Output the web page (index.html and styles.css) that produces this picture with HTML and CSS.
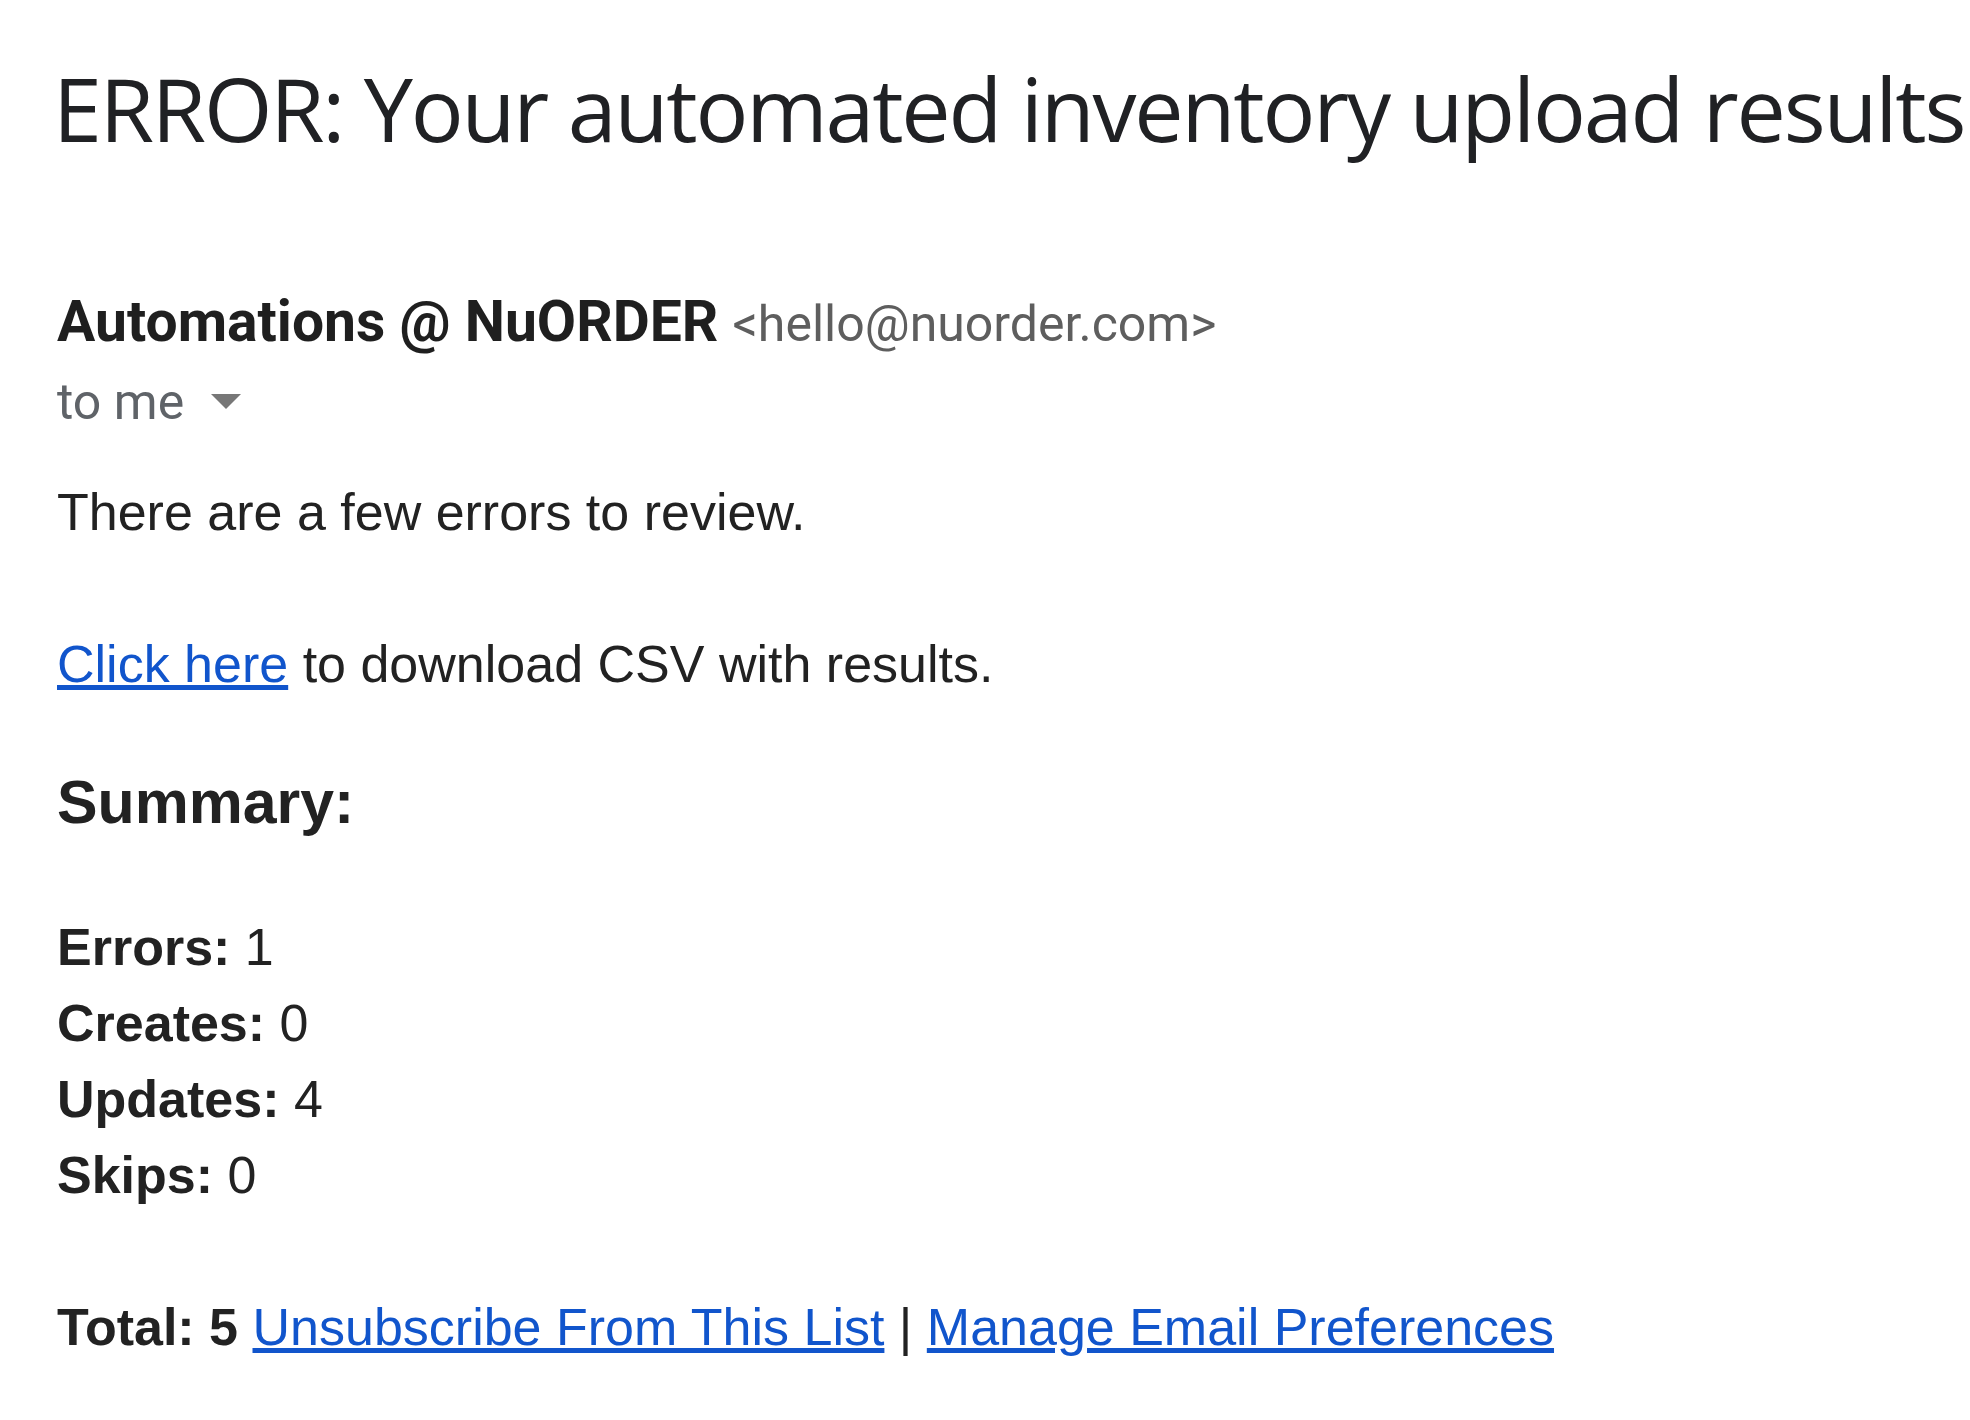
FILE: index.html
```html
<!DOCTYPE html>
<html lang="en">
<head>
    <meta charset="UTF-8">
    <meta name="viewport" content="width=device-width, initial-scale=1.0">
    <title>ERROR: Your automated inventory upload results</title>
    <link rel="stylesheet" href="styles.css">
</head>
<body>

<div class="message">
    <h1 class="subject">ERROR: Your automated inventory upload results</h1>

    <div class="sender">
        <span class="sender-name">Automations @ NuORDER</span>
        <span class="sender-email">&lt;hello@nuorder.com&gt;</span>
    </div>
    <div class="recipient">to me <span class="caret"></span></div>

    <div class="mail-body">
        <p>There are a few errors to review.<br><br><a href="#">Click here</a> to download CSV with results.</p>

        <h3>Summary:</h3>

        <p>
            <b>Errors:</b> 1<br>
            <b>Creates:</b> 0<br>
            <b>Updates:</b> 4<br>
            <b>Skips:</b> 0<br>
            <br>
            <b>Total: 5</b> <a href="#">Unsubscribe From This List</a> | <a href="#">Manage Email Preferences</a>
        </p>
    </div>
</div>

</body>
</html>
```

FILE: styles.css
```css
body {
    margin: 0;
    padding: 0;
    background-color: #fff;
    overflow: hidden;
}
.message {
    padding: 0 0 0 57px;
}
.subject {
    margin: 48px 0 0 -4px;
    font-family: "Open Sans", sans-serif;
    font-weight: 400;
    font-size: 88px;
    line-height: 120px;
    letter-spacing: -2.2px;
    color: #202124;
    white-space: nowrap;
}
.sender {
    margin-top: 121px;
    font-family: Roboto, "Liberation Sans", sans-serif;
    font-size: 57px;
    line-height: 66px;
    white-space: nowrap;
}
.sender-name {
    font-weight: 700;
    color: #1f1f1f;
}
.sender-email {
    font-size: 50px;
    color: #5e5e5e;
}
.recipient {
    margin-top: 15px;
    font-family: Roboto, "Liberation Sans", sans-serif;
    font-size: 50px;
    line-height: 60px;
    color: #5f6368;
}
/* small dropdown arrow next to "to me" */
.caret {
    display: inline-block;
    width: 0;
    height: 0;
    margin: 0 0 10px 14px;
    border-left: 15px solid transparent;
    border-right: 15px solid transparent;
    border-top: 15px solid #777;
}
.mail-body {
    margin-top: 42px;
    font-family: "Liberation Sans", Arial, sans-serif;
    font-size: 52px;
    line-height: 76px;
    color: #222;
}
.mail-body p {
    margin: 0;
}
.mail-body h3 {
    margin: 62px 0 69px 0;
    font-size: 60.8px;
    line-height: 76px;
    font-weight: 700;
}
.mail-body a {
    color: #1155cc;
}
```
